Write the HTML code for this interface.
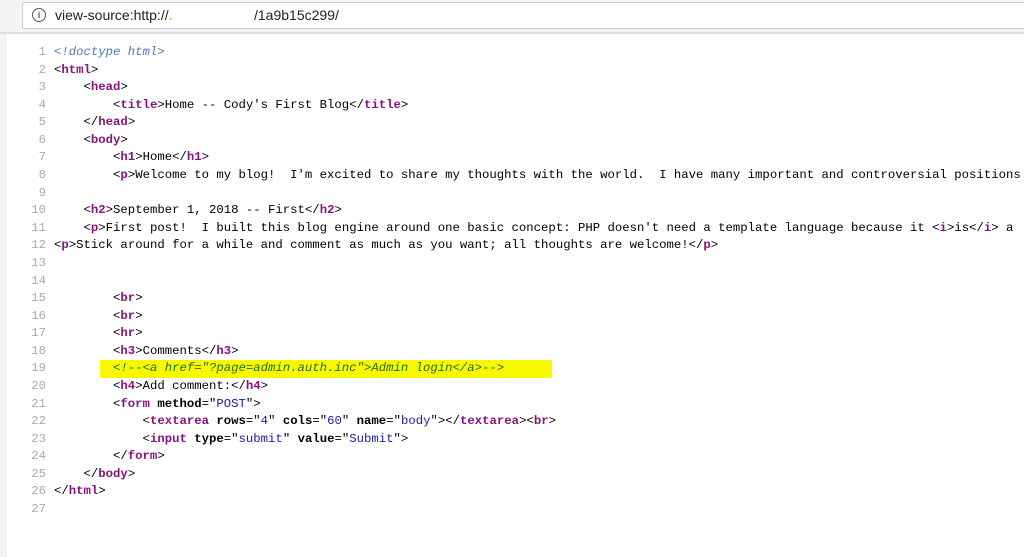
<!DOCTYPE html>
<html><head><meta charset="utf-8"><style>
html,body{margin:0;padding:0;background:#fff;width:1024px;height:557px;overflow:hidden}
.bar{position:absolute;left:0;top:0;width:1024px;height:34px;background:#f4f4f6}
.addr{position:absolute;left:22px;top:2px;width:1010px;height:25px;background:#fff;border:1px solid #ccc;border-radius:2px}
.info{position:absolute;left:9px;top:5px;width:12px;height:12px;border:1.3px solid #555;border-radius:50%;font:bold 9px "Liberation Sans",sans-serif;color:#555;text-align:center;line-height:12px}
.url{position:absolute;left:32px;top:4px;font:14px "Liberation Sans",sans-serif;color:#222;white-space:pre}
.path{position:absolute;left:231px;top:4px;font:14px "Liberation Sans",sans-serif;color:#222}
.sep{position:absolute;left:0;top:32px;width:1024px;height:2px;background:#ddd}
.gut{position:absolute;left:0;top:34px;width:7px;height:523px;background:#f2f3f5}
.hlb{position:absolute;left:100px;top:360px;width:452px;height:18px;background:#f8f800}
.code{position:absolute;left:0;top:44px;font:12.3px "Liberation Mono","Noto Sans CJK SC",monospace;line-height:17.58px;white-space:pre;color:#000}
.ln{display:inline-block;width:46px;text-align:right;color:#aaa;margin-right:8px}
.t{color:#881280;font-weight:bold}
.a{font-weight:bold}
.v{color:#1a1aa6}
.c{color:#236e25;font-style:italic}
.d{color:#4a7ab8;font-style:italic}
</style></head><body>
<div class="bar"><div class="addr"><div class="info">i</div><div class="url">view-source:http://<span style="color:#e08000">.</span></div><div class="path">/1a9b15c299/</div></div></div>
<div class="sep"></div>
<div class="gut"></div>
<div class="hlb"></div>
<div class="code"><span class="ln">1</span><span class="d">&lt;!doctype html&gt;</span>
<span class="ln">2</span>&lt;<span class="t">html</span>&gt;
<span class="ln">3</span>    &lt;<span class="t">head</span>&gt;
<span class="ln">4</span>        &lt;<span class="t">title</span>&gt;Home -- Cody's First Blog&lt;/<span class="t">title</span>&gt;
<span class="ln">5</span>    &lt;/<span class="t">head</span>&gt;
<span class="ln">6</span>    &lt;<span class="t">body</span>&gt;
<span class="ln">7</span>        &lt;<span class="t">h1</span>&gt;Home&lt;/<span class="t">h1</span>&gt;
<span class="ln">8</span>        &lt;<span class="t">p</span>&gt;Welcome to my blog!  I'm excited to share my thoughts with the world.  I have many important and controversial positions
<span class="ln">9</span>
<span class="ln">10</span>    &lt;<span class="t">h2</span>&gt;September 1, 2018 -- First&lt;/<span class="t">h2</span>&gt;
<span class="ln">11</span>    &lt;<span class="t">p</span>&gt;First post!  I built this blog engine around one basic concept: PHP doesn't need a template language because it &lt;<span class="t">i</span>&gt;is&lt;/<span class="t">i</span>&gt; a
<span class="ln">12</span>&lt;<span class="t">p</span>&gt;Stick around for a while and comment as much as you want; all thoughts are welcome!&lt;/<span class="t">p</span>&gt;
<span class="ln">13</span>
<span class="ln">14</span>
<span class="ln">15</span>        &lt;<span class="t">br</span>&gt;
<span class="ln">16</span>        &lt;<span class="t">br</span>&gt;
<span class="ln">17</span>        &lt;<span class="t">hr</span>&gt;
<span class="ln">18</span>        &lt;<span class="t">h3</span>&gt;Comments&lt;/<span class="t">h3</span>&gt;
<span class="ln">19</span>        <span class="c">&lt;!--&lt;a href="?page=admin.auth.inc"&gt;Admin login&lt;/a&gt;--&gt;</span>
<span class="ln">20</span>        &lt;<span class="t">h4</span>&gt;Add comment:&lt;/<span class="t">h4</span>&gt;
<span class="ln">21</span>        &lt;<span class="t">form</span> <span class="a">method</span>="<span class="v">POST</span>"&gt;
<span class="ln">22</span>            &lt;<span class="t">textarea</span> <span class="a">rows</span>="<span class="v">4</span>" <span class="a">cols</span>="<span class="v">60</span>" <span class="a">name</span>="<span class="v">body</span>"&gt;&lt;/<span class="t">textarea</span>&gt;&lt;<span class="t">br</span>&gt;
<span class="ln">23</span>            &lt;<span class="t">input</span> <span class="a">type</span>="<span class="v">submit</span>" <span class="a">value</span>="<span class="v">Submit</span>"&gt;
<span class="ln">24</span>        &lt;/<span class="t">form</span>&gt;
<span class="ln">25</span>    &lt;/<span class="t">body</span>&gt;
<span class="ln">26</span>&lt;/<span class="t">html</span>&gt;
<span class="ln">27</span>
</div>
</body></html>
